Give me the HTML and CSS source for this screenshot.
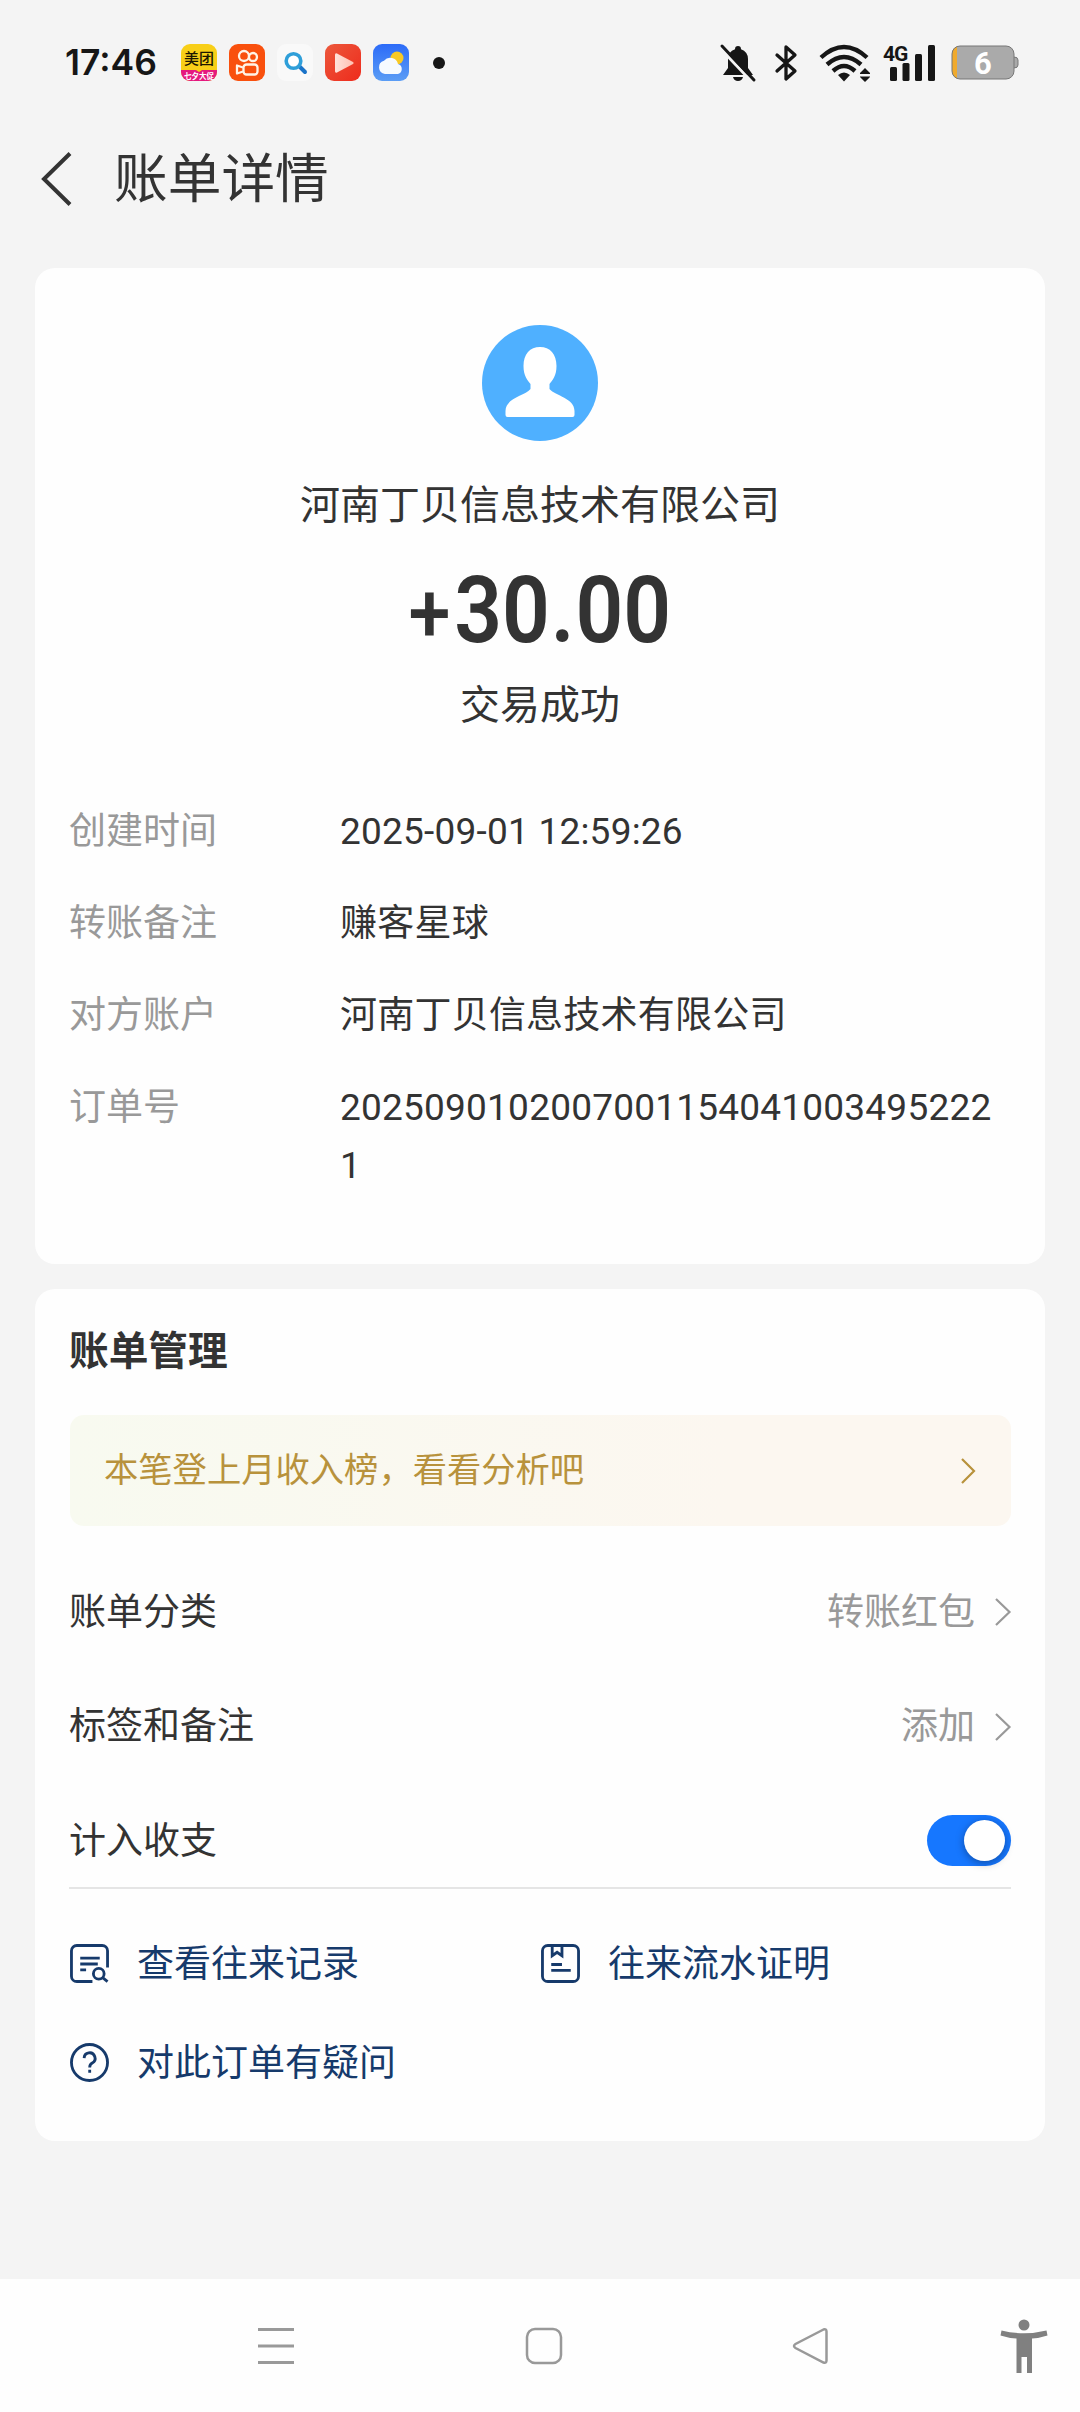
FILE: index.html
```html
<!DOCTYPE html>
<html lang="zh-CN">
<head>
<meta charset="utf-8">
<title>账单详情</title>
<link rel="stylesheet" href="styles.css">
</head>
<body>
<header class="status">
  <span class="clock">17:46</span>
  <div class="apps">
    <svg class="app" viewBox="0 0 36 37"><defs><clipPath id="r"><rect width="36" height="37" rx="9"/></clipPath></defs><g clip-path="url(#r)"><rect width="36" height="37" fill="#f8cf18"/><path d="M0 26h15l3 2 3-2h15v11H0z" fill="#e5187e"/></g><text x="18" y="20" class="app-name">美团</text><text x="18" y="35" class="app-tag">七夕大促</text></svg>
    <svg class="app" viewBox="0 0 36 37"><rect width="36" height="37" rx="9" fill="#f9500d"/><g fill="none" stroke="#fff3e6" stroke-width="2.3"><circle cx="15" cy="12" r="5"/><circle cx="24" cy="13" r="4"/><rect x="14.5" y="20.500" width="14" height="10" rx="3"/><path d="M14 23.500l-6-2v8l6-2" stroke-linejoin="round"/></g></svg>
    <svg class="app" viewBox="0 0 36 37"><rect width="36" height="37" rx="9" fill="#f9f9f9"/><path d="M22 22l6 6" stroke="#1a73c8" stroke-width="4" stroke-linecap="round"/><circle cx="16.500" cy="17" r="7.300" fill="#fff" stroke="#2f9fd9" stroke-width="3.600"/></svg>
    <svg class="app" viewBox="0 0 36 37"><defs><linearGradient id="p" x2="1" y2="1"><stop stop-color="#ec583c"/><stop offset="1" stop-color="#ee2b1c"/></linearGradient><linearGradient id="q" x2="1" y2="0"><stop stop-color="#ffe2da"/><stop offset="1" stop-color="#ffc0b2"/></linearGradient></defs><rect width="36" height="37" rx="9" fill="url(#p)"/><path d="M12 9.500l16 8.500q1.500 1 0 2l-16 8.500q-2 .8-2-1.500V11q0-2.300 2-1.500z" fill="url(#q)"/></svg>
    <svg class="app" viewBox="0 0 36 37"><defs><linearGradient id="s" x2="0" y2="1"><stop stop-color="#2c6bf8"/><stop offset="1" stop-color="#5b9df5"/></linearGradient></defs><rect width="36" height="37" rx="9" fill="url(#s)"/><circle cx="24" cy="14" r="6.500" fill="#f8c925"/><path d="M12 30a6.800 6.800 0 0 1-1-13.300A8 8 0 0 1 25 20a5.200 5.200 0 0 1 0 10z" fill="#f6faff"/></svg>
  </div>
  <i class="more-dot"></i>
  <div class="system">
    <svg class="bell" viewBox="0 0 36 38" width="36" height="38"><path d="M3 31l5-7v-9a10.500 10.500 0 0 1 7-9.800q0-3.200 3-3.200t3 3.200a10.500 10.500 0 0 1 7 9.800v9l5 7zM13 33h10q-1 4-5 4t-5-4z" fill="#161616"/><path d="M0 4l32 34" stroke="#f4f4f4" stroke-width="3"/><path d="M2 2l32 34" stroke="#161616" stroke-width="3" stroke-linecap="round"/></svg>
    <svg class="bluetooth" viewBox="0 0 22 38" width="22" height="38"><path d="M2 11l18 16-9 8V3l9 8L2 27" fill="none" stroke="#161616" stroke-width="3.300" stroke-linejoin="round" stroke-linecap="round"/></svg>
    <svg class="wifi" viewBox="0 0 52 38" width="52" height="38"><g fill="none" stroke="#161616" stroke-width="4.400"><path d="M2 13.500q23-21 46 0"/><path d="M8 20.500q17-15 34 0"/><path d="M14 27q11-10 22 0"/></g><path d="M19 31q6-5 12 0l-6 6.500zM41 29l5-5 5 5v1H41zM41 32.500h10v.6l-5 4.900-5-4.900z" fill="#161616"/></svg>
    <svg class="signal" viewBox="0 0 53 38" width="53" height="38"><text x="0" y="16.500" class="net">4G</text><g fill="#161616"><rect x="7" y="23" width="7" height="14" rx="1.500"/><rect x="19.500" y="19" width="7" height="18" rx="1.500"/><rect x="32" y="10" width="7" height="27" rx="1.500"/><rect x="45" y="1" width="7" height="36" rx="1.500"/></g></svg>
    <svg class="battery" viewBox="0 0 68 36" width="68" height="36"><defs><clipPath id="b"><rect x="1" y="1" width="62" height="33" rx="8"/></clipPath></defs><path d="M62 12h1q4 0 4 3v5q0 3-4 3h-1z" fill="#a9a9a9" stroke="#777"/><g clip-path="url(#b)"><rect width="64" height="36" fill="#aaa"/><rect width="6" height="36" fill="#f0aa2d"/></g><rect x="1" y="1" width="62" height="33" rx="8" fill="none" stroke="#777"/><text x="32" y="29" class="level">6</text></svg>
  </div>
</header>

<nav class="title-bar">
  <svg width="32" height="56" viewBox="0 0 32 56"><path d="M30 2.500L4 28l26 25.500" fill="none" stroke="#333" stroke-width="4"/></svg>
  <h1>账单详情</h1>
</nav>

<main>
  <section class="card receipt">
    <svg class="avatar" viewBox="0 0 116 116"><circle cx="58" cy="58" r="58" fill="#4fb0ff"/><path d="M58 22c10 0 16.500 7 16.500 19 0 10-4 14-7 18v5c6 7 25 9 25 22v4q0 2-2 2h-65q-2 0-2-2v-4c0-13 19-15 25-22v-5c-3-4-7-8-7-18 0-12 6.500-19 16.500-19z" fill="#fff"/></svg>
    <p class="payee">河南丁贝信息技术有限公司</p>
    <p class="amount"><span class="sign">+</span>30<span class="point">.</span>00</p>
    <p class="state">交易成功</p>
    <dl class="facts">
      <dt>创建时间</dt><dd>2025-09-01 12:59:26</dd>
      <dt>转账备注</dt><dd>赚客星球</dd>
      <dt>对方账户</dt><dd>河南丁贝信息技术有限公司</dd>
      <dt>订单号</dt><dd>20250901020070011540410034952221</dd>
    </dl>
  </section>

  <section class="card manage">
    <h2>账单管理</h2>
    <a class="banner"><span>本笔登上月收入榜，看看分析吧</span><svg width="16" height="28" viewBox="0 0 16 28"><path d="M2 2l12 12L2 26" fill="none" stroke="#b8923c" stroke-width="2.200"/></svg></a>
    <div class="row"><span>账单分类</span><span class="hint">转账红包</span><svg width="18" height="30" viewBox="0 0 18 30"><path d="M2 2l13.500 13L2 28" fill="none" stroke="#999" stroke-width="2.200"/></svg></div>
    <div class="row"><span>标签和备注</span><span class="hint">添加</span><svg width="18" height="30" viewBox="0 0 18 30"><path d="M2 2l13.500 13L2 28" fill="none" stroke="#999" stroke-width="2.200"/></svg></div>
    <div class="row"><span>计入收支</span><i class="switch"></i></div>
    <div class="links">
      <a><svg viewBox="0 0 40 40"><path d="M38.500 24V7a5.500 5.500 0 0 0-5.500-5.500H7A5.500 5.500 0 0 0 1.500 7v26A5.500 5.500 0 0 0 7 38.500h16M10.500 14.500h20M10.500 20.500h18M10.500 26.500h6"/><circle cx="29.500" cy="30.500" r="5.500"/><path d="M33.500 34.500l5 4"/></svg><span>查看往来记录</span></a>
      <a><svg viewBox="0 0 40 40"><rect x="1.500" y="1.500" width="37" height="37" rx="5.500"/><path d="M11.500 2v10l5-3.500 5 3.500V2M10.500 21h11M10.500 27h20"/></svg><span>往来流水证明</span></a>
      <a><svg viewBox="0 0 40 40"><circle cx="20" cy="20" r="18.500"/><path d="M14.500 15.500a5.600 5.600 0 1 1 8.300 5q-2.600 1.500-2.600 4.500M20.200 27.500v3"/></svg><span>对此订单有疑问</span></a>
    </div>
  </section>
</main>

<footer class="nav">
  <svg width="38" height="56" viewBox="0 0 38 56"><path d="M1 11.500h36M1 28h36M1 44.500h36" fill="none" stroke="#999" stroke-width="3"/></svg>
  <svg width="38" height="56" viewBox="0 0 38 56"><rect x="2" y="11" width="34" height="34" rx="8" fill="none" stroke="#999" stroke-width="2.500"/></svg>
  <svg width="38" height="56" viewBox="0 0 38 56"><path d="M30.500 11.500L2.500 26q-3 2 0 4l28 14.500q3 1 3-2v-29q0-3-3-2z" fill="none" stroke="#999" stroke-width="2.500"/></svg>
  <svg class="person" width="48" height="56" viewBox="0 0 48 56"><g fill="#808080"><circle cx="24" cy="7" r="5.500"/><path d="M1.500 12.500Q24 18 46.500 12.500l1 5Q40 20 32 20.500V55h-5V39h-5.500v16h-5V20.500Q8 20 .5 17.500z"/></g></svg>
</footer>
</body>
</html>
```
FILE: styles.css
```css
* { box-sizing: border-box; }
body {
  margin: 0;
  width: 1080px;
  height: 2412px;
  display: flex;
  flex-direction: column;
  overflow: hidden;
  background: #f4f4f4;
  color: #333;
  font-family: Roboto, "Noto Sans CJK SC", sans-serif;
  font-size: 37px;
}
h1, h2, p, dl, dd { margin: 0; }
svg { display: block; flex: none; overflow: visible; }

.status { height: 125px; padding: 0 61px 0 65px; display: flex; align-items: center; }
.clock { width: 116px; font: 600 35.5px/44px Inter, sans-serif; color: #161616; }
.apps { display: flex; gap: 12px; }
.app { width: 36px; height: 37px; }
.app-name { font: 500 15px "Noto Sans CJK SC", sans-serif; text-anchor: middle; fill: #1c1700; }
.app-tag { font: 700 7.5px "Noto Sans CJK SC", sans-serif; text-anchor: middle; fill: #fff; }
.more-dot { width: 12px; height: 12px; margin-left: 24px; border-radius: 50%; background: #161616; }
.system { margin-left: auto; display: flex; align-items: center; }
.bluetooth { margin-left: 19px; }
.wifi { margin-left: 22px; }
.signal { margin-left: 12px; }
.battery { margin-left: 15px; }
.net { font: 700 21px Roboto, sans-serif; fill: #161616; letter-spacing: -1px; }
.level { font: 700 31px Roboto, sans-serif; fill: #fff; text-anchor: middle; }

.title-bar { height: 143px; padding: 26px 0 0 40px; display: flex; gap: 42px; }
.title-bar h1 { padding-top: 1px; font-size: 53.7px; font-weight: 400; line-height: 56px; }

main { padding: 0 35px; display: flex; flex-direction: column; gap: 25px; }
.card { background: #fefefe; border-radius: 20px; }
.receipt { height: 996px; padding-top: 57px; display: flex; flex-direction: column; align-items: center; }
.avatar { width: 116px; height: 116px; }
.payee { margin-top: 35px; font-size: 40px; line-height: 60px; }
.amount { margin-top: 25px; font-size: 93px; font-weight: 600; line-height: 100px; transform: scaleX(.9); }
.sign { margin-right: 4px; font-size: 84px; font-weight: 500; line-height: 1; }
.point { margin: 0 1px; }
.state { margin-top: 15px; font-size: 40px; line-height: 60px; }
.facts { width: 100%; margin-top: 67px; padding: 0 36px 0 34px; display: grid; grid-template-columns: 271px 1fr; row-gap: 34px; line-height: 58px; }
.facts dt { color: #999; }
.facts dd { overflow-wrap: anywhere; letter-spacing: .22px; }

.manage { height: 852px; padding: 33px 34px 0 34px; }
.manage h2 { font-size: 39.7px; line-height: 60px; }
.banner { height: 111px; margin: 33px 0 0 1px; padding: 0 35px 0 34px; display: flex; align-items: center; justify-content: space-between; border-radius: 14px; background: linear-gradient(90deg, #f8faf0, #fcf7f0 70%); color: #b8923c; font-size: 34.3px; }
.banner span { padding-bottom: 8px; }
.row { height: 114.500px; display: flex; align-items: center; }
.row span { padding-bottom: 5px; }
.banner + .row { margin-top: 28px; }
.row .hint { margin-left: auto; color: #999; }
.row svg { margin: 2px -1px 0 19px; }
.switch { width: 84px; height: 51px; margin-left: auto; padding: 5px 6px; border-radius: 26px; background: #1677ff; }
.switch::before { content: ""; display: block; width: 41px; height: 41px; margin-left: auto; border-radius: 50%; background: #fff; box-shadow: 0 2px 8px rgba(0, 0, 0, .35); }
.links { border-top: 2px solid #e5e5e5; margin-top: -11px; padding: 45px 0 0 1px; display: grid; grid-template-columns: 471px 1fr; row-gap: 39px; color: #163a6b; }
.links a { height: 60px; display: flex; align-items: center; gap: 28px; }
.links span { padding-bottom: 5px; }
.links svg { width: 39px; height: 39px; fill: none; stroke: #163a6b; stroke-width: 2.9; }

.nav { height: 133px; margin-top: auto; padding: 0 32px 0 257px; display: flex; align-items: center; background: #fefefe; }
.nav svg + svg { margin-left: 230px; }
.nav svg.person { margin-left: auto; }
```
